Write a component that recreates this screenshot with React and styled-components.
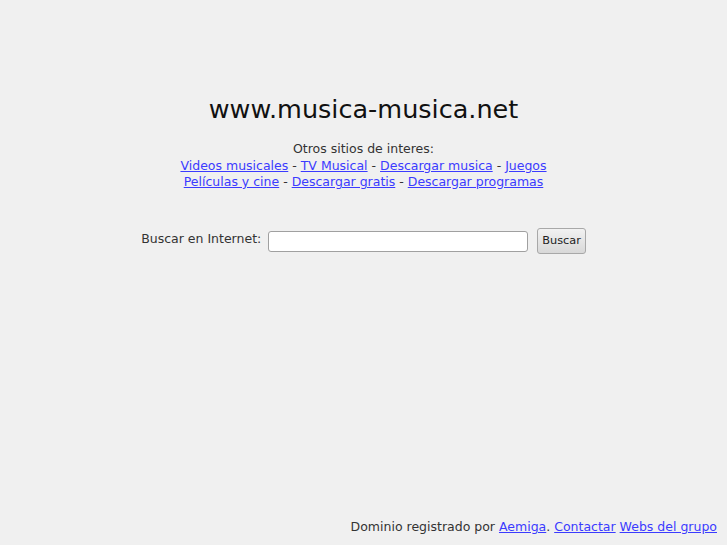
import React from 'react';
import styled, { createGlobalStyle } from 'styled-components';

const Global = createGlobalStyle`
  html, body {
    margin: 0;
    padding: 0;
    height: 100%;
    background: #f0f0f0;
  }
  #root {
    height: 100%;
  }
  body {
    font-family: 'DejaVu Sans', sans-serif;
    color: #333;
  }
`;

const Page = styled.div`
  height: 100%;
  display: flex;
  flex-direction: column;
`;

const Main = styled.div`
  flex: 1;
  display: flex;
  flex-direction: column;
  align-items: center;
  padding-top: 92px;
`;

const Title = styled.h1`
  margin: 0;
  font-size: 25.5px;
  font-weight: normal;
  color: #111;
  line-height: 34px;
`;

const Others = styled.div`
  margin-top: 15px;
  font-size: 12.5px;
  line-height: 16.5px;
  text-align: center;
`;

const Link = styled.a`
  color: #3b3bff;
  text-decoration: underline;
`;

const SearchRow = styled.form`
  margin-top: 37px;
  display: flex;
  align-items: center;
  font-size: 12.5px;
`;

const Label = styled.label`
  margin-right: 7px;
  margin-top: -5px;
`;

const Input = styled.input`
  width: 256px;
  height: 17px;
  padding: 1px;
  border: 1px solid #a0a0a0;
  border-radius: 3px;
  background: #fff;
  margin-right: 9px;
  margin-top: 1px;
`;

const Button = styled.button`
  font-family: 'DejaVu Sans', sans-serif;
  font-size: 11.3px;
  color: #222;
  height: 26px;
  padding: 0 4px;
  border: 1px solid #a8a8a8;
  border-radius: 3px;
  background: linear-gradient(#f2f2f2, #d8d8d8);
`;

const Footer = styled.div`
  text-align: right;
  font-size: 12.5px;
  padding: 0 10px 10px 0;
  line-height: 17px;
`;

export default function App() {
  return (
    <Page>
      <Global />
      <Main>
        <Title>www.musica-musica.net</Title>
        <Others>
          Otros sitios de interes:
          <br />
          <Link href="#">Videos musicales</Link> - <Link href="#">TV Musical</Link> -{' '}
          <Link href="#">Descargar musica</Link> - <Link href="#">Juegos</Link>
          <br />
          <Link href="#">Películas y cine</Link> - <Link href="#">Descargar gratis</Link> -{' '}
          <Link href="#">Descargar programas</Link>
        </Others>
        <SearchRow onSubmit={e => e.preventDefault()}>
          <Label>Buscar en Internet:</Label>
          <Input type="text" />
          <Button type="submit">Buscar</Button>
        </SearchRow>
      </Main>
      <Footer>
        Dominio registrado por <Link href="#">Aemiga</Link>. <Link href="#">Contactar</Link>{' '}
        <Link href="#">Webs del grupo</Link>
      </Footer>
    </Page>
  );
}
